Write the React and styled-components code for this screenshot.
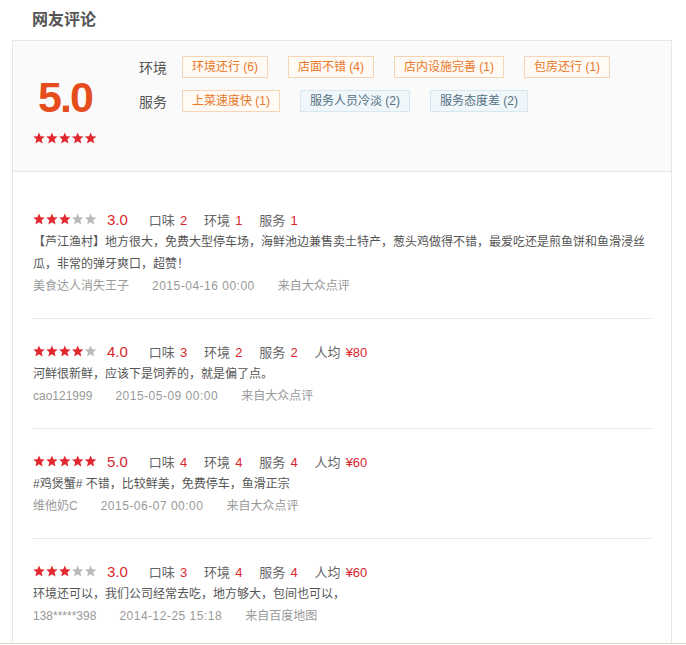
import React from "react";
import styled, { createGlobalStyle } from "styled-components";

const GlobalStyle = createGlobalStyle`
  body {
    margin: 0;
    background: #fff;
    font-family: "Liberation Sans", Arial, "Noto Sans CJK SC", sans-serif;
  }
`;

const Page = styled.div`
  width: 686px;
  height: 643px;
  overflow: hidden;
  border-bottom: 1px solid #d9d9c8;
`;

const Title = styled.h2`
  margin: 0;
  padding-left: 32px;
  height: 40px;
  line-height: 40px;
  font-size: 16px;
  font-weight: bold;
  color: #555;
`;

const Panel = styled.div`
  margin-left: 12px;
  width: 660px;
  box-sizing: border-box;
  border: 1px solid #e6e6e6;
  min-height: 700px;
`;

const Summary = styled.div`
  display: flex;
  height: 130px;
  background: #fafafa;
  border-bottom: 1px solid #e6e6e6;
`;

const ScoreCol = styled.div`
  width: 104px;
  padding-top: 34px;
  text-align: center;
`;

const Score = styled.div`
  font-size: 43px;
  line-height: 44px;
  font-weight: bold;
  letter-spacing: -2px;
  color: #e54d1d;
  margin-bottom: 11px;
`;

const TagArea = styled.div`
  margin-left: 22px;
  padding-top: 15px;
  display: flex;
  flex-direction: column;
  gap: 12px;
`;

const TagRow = styled.div`
  display: flex;
  align-items: center;
`;

const TagLabel = styled.span`
  width: 43px;
  font-size: 14px;
  color: #555;
`;

const Tag = styled.span`
  height: 20px;
  line-height: 20px;
  padding: 0 9px;
  margin-right: 20px;
  font-size: 12px;
  border: 1px solid ${(p) => (p.$bad ? "#d6e7ef" : "#f6d6ba")};
  background: ${(p) => (p.$bad ? "#eff7fb" : "#fffaf4")};
  color: ${(p) => (p.$bad ? "#56707f" : "#e7782a")};
`;

const List = styled.div`
  padding: 15px 19px 0 20px;
`;

const Review = styled.div`
  padding: 20px 0 21px;
  border-bottom: 1px solid #e8e8e8;
`;

const Head = styled.div`
  display: flex;
  align-items: center;
  height: 24px;
`;

const Rating = styled.span`
  margin-left: 10px;
  margin-right: 21px;
  font-size: 15px;
  color: #d9272e;
`;

const Sub = styled.span`
  margin-right: 17px;
  font-size: 13px;
  color: #666;
  b {
    font-weight: normal;
    color: #d9272e;
    margin-left: 5px;
  }
`;

const Text = styled.p`
  margin: 0;
  font-size: 12px;
  line-height: 22px;
  color: #555;
`;

const Meta = styled.div`
  display: flex;
  height: 22px;
  line-height: 22px;
  font-size: 12px;
  color: #999;
  span {
    margin-right: 23px;
  }
`;

const Date = styled.span`
  letter-spacing: 0.5px;
`;

const starPath =
  "M6 0.5 L7.6 4.3 L11.7 4.6 L8.6 7.3 L9.6 11.4 L6 9.2 L2.4 11.4 L3.4 7.3 L0.3 4.6 L4.4 4.3 Z";

const Stars = ({ n }) => (
  <svg width="64" height="12" viewBox="0 0 64 12">
    {[0, 1, 2, 3, 4].map((i) => (
      <path
        key={i}
        d={starPath}
        transform={`translate(${i * 12.9} 0)`}
        fill={i < n ? "#e0282e" : "#bbb"}
      />
    ))}
  </svg>
);

const reviews = [
  {
    stars: 3,
    score: "3.0",
    taste: 2,
    env: 1,
    service: 1,
    text: "【芦江渔村】地方很大，免费大型停车场，海鲜池边兼售卖土特产，葱头鸡做得不错，最爱吃还是煎鱼饼和鱼滑浸丝瓜，非常的弹牙爽口，超赞！",
    user: "美食达人消失王子",
    date: "2015-04-16 00:00",
    from: "来自大众点评",
  },
  {
    stars: 4,
    score: "4.0",
    taste: 3,
    env: 2,
    service: 2,
    price: "¥80",
    text: "河鲜很新鲜，应该下是饲养的，就是偏了点。",
    user: "cao121999",
    date: "2015-05-09 00:00",
    from: "来自大众点评",
  },
  {
    stars: 5,
    score: "5.0",
    taste: 4,
    env: 4,
    service: 4,
    price: "¥60",
    text: "#鸡煲蟹# 不错，比较鲜美，免费停车，鱼滑正宗",
    user: "维他奶C",
    date: "2015-06-07 00:00",
    from: "来自大众点评",
  },
  {
    stars: 3,
    score: "3.0",
    taste: 3,
    env: 4,
    service: 4,
    price: "¥60",
    text: "环境还可以，我们公司经常去吃，地方够大，包间也可以，",
    user: "138*****398",
    date: "2014-12-25 15:18",
    from: "来自百度地图",
  },
];

const App = () => (
  <Page>
    <GlobalStyle />
    <Title>网友评论</Title>
    <Panel>
      <Summary>
        <ScoreCol>
          <Score>5.0</Score>
          <Stars n={5} />
        </ScoreCol>
        <TagArea>
          <TagRow>
            <TagLabel>环境</TagLabel>
            <Tag>环境还行 (6)</Tag>
            <Tag>店面不错 (4)</Tag>
            <Tag>店内设施完善 (1)</Tag>
            <Tag>包房还行 (1)</Tag>
          </TagRow>
          <TagRow>
            <TagLabel>服务</TagLabel>
            <Tag>上菜速度快 (1)</Tag>
            <Tag $bad>服务人员冷淡 (2)</Tag>
            <Tag $bad>服务态度差 (2)</Tag>
          </TagRow>
        </TagArea>
      </Summary>
      <List>
        {reviews.map((r, i) => (
          <Review key={i}>
            <Head>
              <Stars n={r.stars} />
              <Rating>{r.score}</Rating>
              <Sub>
                口味<b>{r.taste}</b>
              </Sub>
              <Sub>
                环境<b>{r.env}</b>
              </Sub>
              <Sub>
                服务<b>{r.service}</b>
              </Sub>
              {r.price && (
                <Sub>
                  人均<b>{r.price}</b>
                </Sub>
              )}
            </Head>
            <Text>{r.text}</Text>
            <Meta>
              <span>{r.user}</span>
              <Date>{r.date}</Date>
              <span>{r.from}</span>
            </Meta>
          </Review>
        ))}
      </List>
    </Panel>
  </Page>
);

export default App;
